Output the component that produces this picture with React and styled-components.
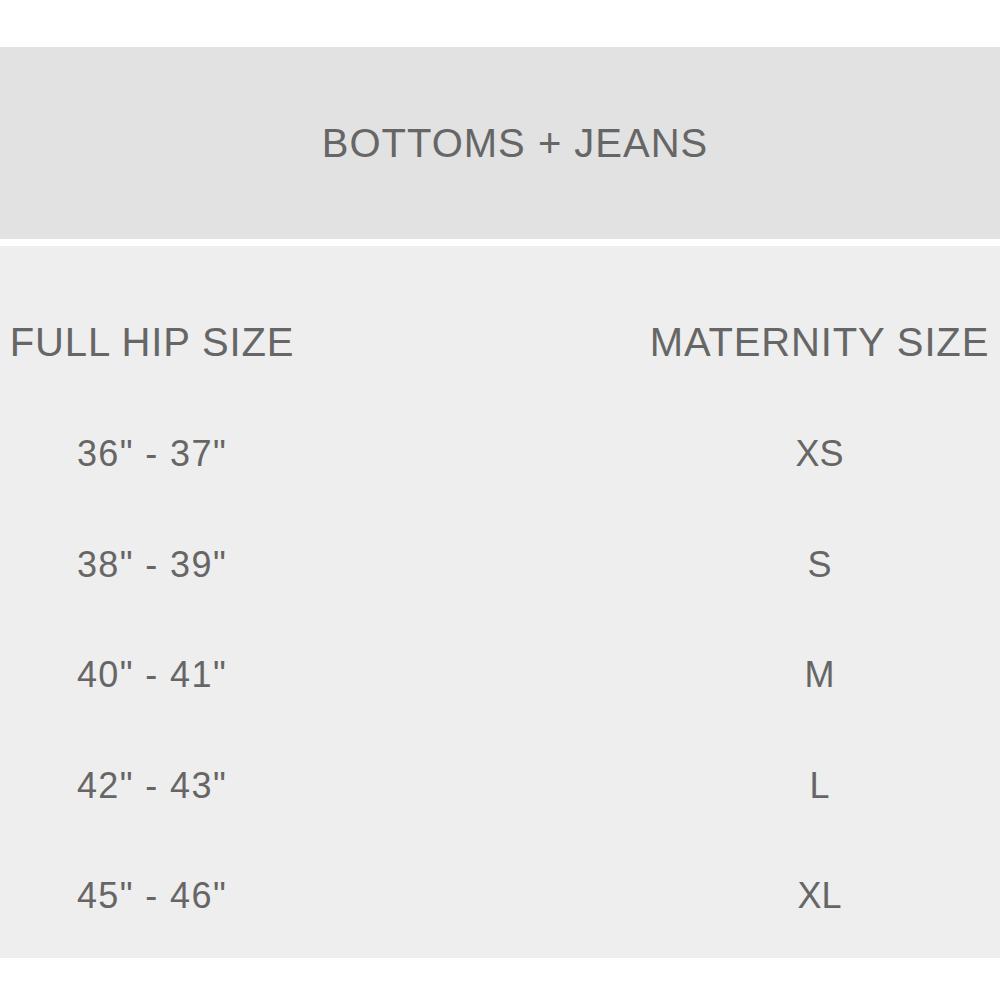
import styled, { createGlobalStyle } from "styled-components"

const GlobalStyle = createGlobalStyle`
    body {
        margin: 0;
        background: #ffffff;
        font-family: "Liberation Sans", Arial, sans-serif;
    }
`

const rows = [
    { hip: `36" - 37"`, size: "XS" },
    { hip: `38" - 39"`, size: "S" },
    { hip: `40" - 41"`, size: "M" },
    { hip: `42" - 43"`, size: "L" },
    { hip: `45" - 46"`, size: "XL" },
]

export default function App(){
    return(
        <>
            <GlobalStyle />
            <Page>
                <Banner>
                    <Title>BOTTOMS + JEANS</Title>
                </Banner>
                <Chart>
                    <HeadRow>
                        <Cell $col="left" $head>FULL HIP SIZE</Cell>
                        <Cell $col="right" $head>MATERNITY SIZE</Cell>
                    </HeadRow>
                    {rows.map((row, index) => (
                        <Row key={index}>
                            <Cell $col="left">{row.hip}</Cell>
                            <Cell $col="right">{row.size}</Cell>
                        </Row>
                    ))}
                </Chart>
            </Page>
        </>
    )
}

const Page = styled.div`
    width: 1000px;
    padding-top: 47px;
    display: flex;
    flex-direction: column;
    gap: 7px;
`

const Banner = styled.div`
    height: 192px;
    background-color: #e2e2e2;
    display: flex;
    align-items: center;
    justify-content: center;
    padding-left: 30px;
`

const Title = styled.h1`
    margin: 0;
    font-size: 40px;
    font-weight: 400;
    color: #666666;
    letter-spacing: 1px;
`

const Chart = styled.div`
    background-color: #eeeeee;
    padding: 38px 0 6.5px;
`

const HeadRow = styled.div`
    display: grid;
    grid-template-columns: 304px 1fr;
    height: 115px;
    align-items: center;
`

const Row = styled(HeadRow)`
    height: 110.5px;
`

const Cell = styled.div`
    color: #666666;
    font-size: ${props => props.$head ? "40px" : "36px"};
    letter-spacing: ${props => props.$head ? "0.85px" : props.$col === "left" ? "1.4px" : "0"};
    line-height: 1;
    white-space: nowrap;
    text-align: center;
    padding-left: ${props => props.$col === "right" ? "335px" : "0"};
`
